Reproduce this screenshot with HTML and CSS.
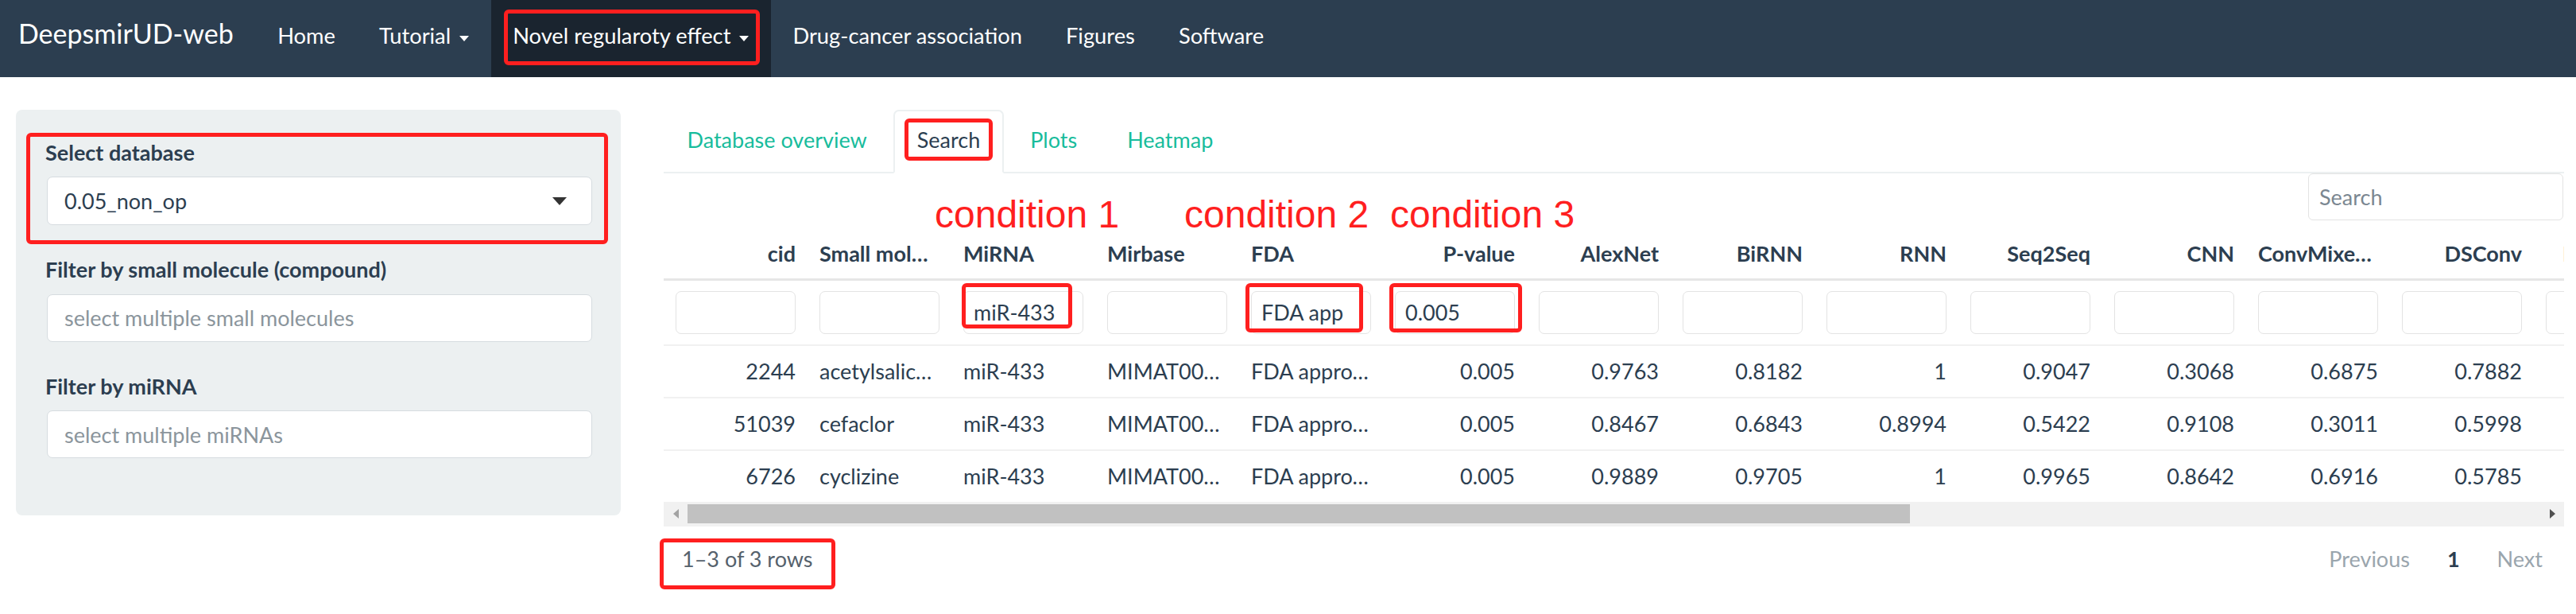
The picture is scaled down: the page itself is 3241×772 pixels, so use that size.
FILE: index.html
```html
<!DOCTYPE html>
<html lang="en">
<head>
<meta charset="utf-8">
<title>DeepsmirUD-web</title>
<link rel="stylesheet" href="styles.css">
</head>
<body>
<nav class="navbar">
  <a class="brand">DeepsmirUD-web</a>
  <ul class="nav">
    <li><a class="nav-link">Home</a></li>
    <li><a class="nav-link">Tutorial<span class="caret"></span></a></li>
    <li class="active"><a class="nav-link">Novel regularoty effect<span class="caret"></span></a><span class="mark mark-nav"></span></li>
    <li><a class="nav-link">Drug-cancer association</a></li>
    <li><a class="nav-link">Figures</a></li>
    <li><a class="nav-link">Software</a></li>
  </ul>
</nav>

<div class="page">
  <aside class="well">
    <div class="group">
      <label class="lbl">Select database</label>
      <div class="select"><span>0.05_non_op</span><span class="sel-caret"></span></div>
      <span class="mark mark-db"></span>
    </div>
    <div class="group">
      <label class="lbl">Filter by small molecule (compound)</label>
      <input class="ctl" type="text" placeholder="select multiple small molecules">
    </div>
    <div class="group">
      <label class="lbl">Filter by miRNA</label>
      <input class="ctl" type="text" placeholder="select multiple miRNAs">
    </div>
  </aside>

  <main class="main">
    <ul class="tabs">
      <li><a>Database overview</a></li>
      <li class="active"><a>Search</a><span class="mark mark-tab"></span></li>
      <li><a>Plots</a></li>
      <li><a>Heatmap</a></li>
    </ul>

    <section class="tab-content">
      <span class="cond cond1">condition 1</span>
      <span class="cond cond2">condition 2</span>
      <span class="cond cond3">condition 3</span>

      <div class="search-row"><input class="search" type="text" placeholder="Search"></div>

      <div class="rt">
        <table>
          <thead>
            <tr class="hdr">
              <th class="num">cid</th><th>Small molecule</th><th>MiRNA</th><th>Mirbase</th><th>FDA</th>
              <th class="num">P-value</th><th class="num">AlexNet</th><th class="num">BiRNN</th><th class="num">RNN</th>
              <th class="num">Seq2Seq</th><th class="num">CNN</th><th class="num">ConvMixer64</th><th class="num">DSConv</th>
              <th class="num">LSTMCNN</th><th class="num">MobileNetV2</th><th class="num">ResNet18</th><th class="num">ResNet50</th>
              <th class="num">SCAResNet18</th><th class="num">Avg</th><th class="num">Vote</th>
            </tr>
            <tr class="filters">
              <td><input class="flt"></td>
              <td><input class="flt"></td>
              <td><input class="flt" value="miR-433"><span class="mark mark-f1"></span></td>
              <td><input class="flt"></td>
              <td><input class="flt" value="FDA app"><span class="mark mark-f2"></span></td>
              <td><input class="flt" value="0.005"><span class="mark mark-f3"></span></td>
              <td><input class="flt"></td><td><input class="flt"></td><td><input class="flt"></td>
              <td><input class="flt"></td><td><input class="flt"></td><td><input class="flt"></td>
              <td><input class="flt"></td><td><input class="flt"></td><td><input class="flt"></td>
              <td><input class="flt"></td><td><input class="flt"></td><td><input class="flt"></td>
              <td><input class="flt"></td><td><input class="flt"></td>
            </tr>
          </thead>
          <tbody>
            <tr>
              <td class="num">2244</td><td>acetylsalicylic acid</td><td>miR-433</td><td>MIMAT0001627</td><td>FDA approved</td>
              <td class="num">0.005</td><td class="num">0.9763</td><td class="num">0.8182</td><td class="num">1</td>
              <td class="num">0.9047</td><td class="num">0.3068</td><td class="num">0.6875</td><td class="num">0.7882</td>
              <td class="num">0.8421</td><td class="num">0.7315</td><td class="num">0.9012</td><td class="num">0.6634</td>
              <td class="num">0.8876</td><td class="num">0.7919</td><td class="num">11</td>
            </tr>
            <tr>
              <td class="num">51039</td><td>cefaclor</td><td>miR-433</td><td>MIMAT0001627</td><td>FDA approved</td>
              <td class="num">0.005</td><td class="num">0.8467</td><td class="num">0.6843</td><td class="num">0.8994</td>
              <td class="num">0.5422</td><td class="num">0.9108</td><td class="num">0.3011</td><td class="num">0.5998</td>
              <td class="num">0.7254</td><td class="num">0.6617</td><td class="num">0.8135</td><td class="num">0.5902</td>
              <td class="num">0.7441</td><td class="num">0.6929</td><td class="num">10</td>
            </tr>
            <tr>
              <td class="num">6726</td><td>cyclizine</td><td>miR-433</td><td>MIMAT0001627</td><td>FDA approved</td>
              <td class="num">0.005</td><td class="num">0.9889</td><td class="num">0.9705</td><td class="num">1</td>
              <td class="num">0.9965</td><td class="num">0.8642</td><td class="num">0.6916</td><td class="num">0.5785</td>
              <td class="num">0.9320</td><td class="num">0.8857</td><td class="num">0.9541</td><td class="num">0.8013</td>
              <td class="num">0.9277</td><td class="num">0.8809</td><td class="num">12</td>
            </tr>
          </tbody>
        </table>
      </div>

      <div class="hscroll">
        <span class="sb-btn"><span class="arrow-left"></span></span>
        <span class="thumb"></span>
        <span class="sb-space"></span>
        <span class="sb-btn"><span class="arrow-right"></span></span>
      </div>

      <div class="pager">
        <div class="info">1–3 of 3 rows<span class="mark mark-info"></span></div>
        <div class="pages">
          <span class="pg dis">Previous</span>
          <span class="pg cur">1</span>
          <span class="pg dis">Next</span>
        </div>
      </div>
    </section>
  </main>
</div>
</body>
</html>
```

FILE: styles.css
```css
* { box-sizing: border-box; }

body {
  margin: 0;
  font-family: Lato, "Liberation Sans", sans-serif;
  font-size: 27px;
  color: #2c3e50;
  background: #fff;
}

/* annotation boxes drawn over the UI */
.mark {
  position: absolute;
  border: 5px solid #ff1f1f;
  border-radius: 6px;
  pointer-events: none;
}

/* ---------- navbar ---------- */
.navbar {
  display: flex;
  height: 97px;
  background: #2c3e50;
}
.brand {
  padding: 22px 28px 0 23px;
  font-size: 34px;
  line-height: 40.8px;
  color: #fff;
}
.nav {
  display: flex;
  margin: 0;
  padding: 0;
  list-style: none;
  font-size: 27.3px;
}
.nav li { position: relative; }
.nav li.active { background: #1a242f; }
.nav-link {
  display: block;
  padding: 26px 27.5px 33px;
  line-height: 38px;
  color: #fff;
  white-space: nowrap;
}
.caret {
  display: inline-block;
  width: 0;
  height: 0;
  margin-left: 11px;
  vertical-align: middle;
  border-top: 7px solid #fff;
  border-left: 6.5px solid transparent;
  border-right: 6.5px solid transparent;
}
.mark-nav { left: 16px; right: 14px; top: 12px; bottom: 15px; }

/* ---------- page ---------- */
.page {
  display: flex;
  align-items: flex-start;
  gap: 54px;
  padding: 41px 15px 40px 20px;
}

/* ---------- sidebar ---------- */
.well {
  flex: 0 0 761px;
  padding: 38px 36px 72px 37px;
  background: #ecf0f1;
  border-radius: 8px;
}
.group { position: relative; margin-bottom: 40px; }
.group:last-child { margin-bottom: 0; }
.lbl {
  display: block;
  margin: 0 0 14px 0;
  font-weight: 700;
  line-height: 32.4px;
}
.select {
  display: flex;
  align-items: center;
  justify-content: space-between;
  height: 61px;
  margin-left: 2px;
  padding: 0 31px 0 21px;
  background: #fff;
  border: 1px solid #d6dce0;
  border-radius: 7px;
  line-height: 32.4px;
}
.sel-caret {
  width: 0;
  height: 0;
  border-top: 10px solid #333;
  border-left: 9px solid transparent;
  border-right: 9px solid transparent;
}
.mark-db { left: -24px; right: -20px; top: -9px; bottom: -24px; }
.ctl {
  display: block;
  width: calc(100% - 2px);
  height: 60px;
  margin-left: 2px;
  padding: 0 21px;
  font: inherit;
  color: #2c3e50;
  background: #fff;
  border: 1px solid #d6dce0;
  border-radius: 7px;
}
.ctl::placeholder { color: #8b959c; }

/* ---------- main panel ---------- */
.main { flex: 1 1 auto; min-width: 0; }
.tabs {
  display: flex;
  margin: 0;
  padding: 0;
  list-style: none;
  border-bottom: 2px solid #ecf0f1;
}
.tabs li {
  position: relative;
  margin: 0 4px -2px 0;
}
.tabs a {
  display: block;
  padding: 16.6px 27.5px 21.4px;
  line-height: 38px;
  color: #18bc9c;
  border: 2px solid transparent;
  border-radius: 7px 7px 0 0;
}
.tabs li.active a {
  color: #2c3e50;
  background: #fff;
  border-color: #ecf0f1 #ecf0f1 transparent;
}
.mark-tab { left: 14px; right: 14px; top: 11px; bottom: 16px; }

.tab-content { position: relative; }
.cond {
  position: absolute;
  top: 28px;
  font-family: "Liberation Sans", Arial, sans-serif;
  font-size: 48px;
  line-height: 47px;
  color: #ff1f1f;
  white-space: nowrap;
  z-index: 2;
}
.cond1 { left: 341px; }
.cond2 { left: 655px; }
.cond3 { left: 914px; }

.search-row {
  display: flex;
  justify-content: flex-end;
  margin-bottom: 12px;
}
.search {
  width: 321px;
  height: 59px;
  margin-right: 1px;
  padding: 0 13px;
  font: inherit;
  border: 1px solid #e3e3e3;
  border-radius: 6px;
}
.search::placeholder { color: #7b8791; }

/* ---------- table ---------- */
.rt { overflow: hidden; }
table {
  width: 3620px;
  table-layout: fixed;
  border-collapse: separate;
  border-spacing: 0;
}
th, td {
  width: 181px;
  padding: 13px 15px;
  line-height: 38px;
  text-align: left;
  white-space: nowrap;
  overflow: hidden;
  text-overflow: ellipsis;
  font-weight: 400;
}
.hdr th {
  padding: 11.5px 24px 11.5px 15px;
  font-weight: 700;
  border-bottom: 3px solid #e6e6e6;
}
.hdr th.num { padding-right: 15px; }
th.num, td.num { text-align: right; }
.filters td {
  position: relative;
  padding: 13px 15px;
  overflow: visible;
}
.flt {
  display: block;
  width: 100%;
  height: 54px;
  padding: 0 12px;
  font: inherit;
  color: #2c3e50;
  background: #fff;
  border: 1px solid #e3e3e3;
  border-radius: 7px;
}
tbody td { border-top: 2px solid #f1f1f1; }
.mark-f1 { left: 13px; top: 3px; width: 139px; height: 57px; }
.mark-f2 { left: 8px; top: 3px; width: 148px; height: 62px; }
.mark-f3 { left: 8px; top: 3px; width: 167px; height: 62px; }

/* ---------- horizontal scrollbar ---------- */
.hscroll {
  display: flex;
  align-items: center;
  height: 31px;
  background: #f1f1f1;
}
.sb-btn {
  display: flex;
  flex: 0 0 30px;
  align-items: center;
  justify-content: center;
  height: 31px;
}
.arrow-left {
  width: 0; height: 0;
  border-right: 7px solid #a3a3a3;
  border-top: 6.5px solid transparent;
  border-bottom: 6.5px solid transparent;
}
.arrow-right {
  width: 0; height: 0;
  border-left: 7px solid #505050;
  border-top: 6.5px solid transparent;
  border-bottom: 6.5px solid transparent;
}
.thumb {
  flex: 0 0 1538px;
  height: 24px;
  background: #c1c1c1;
}
.sb-space { flex: 1 1 auto; }

/* ---------- pagination ---------- */
.pager {
  display: flex;
  justify-content: space-between;
  padding: 22px 5px 0 23px;
  line-height: 38px;
}
.info { position: relative; color: #55616c; }
.mark-info { left: -28px; right: -28px; top: -7px; bottom: -19px; }
.pages { display: flex; gap: 3px; }
.pg { padding: 0 22px; }
.dis { color: #9aa5ad; }
.cur { color: #2c3e50; font-weight: 700; }
```
